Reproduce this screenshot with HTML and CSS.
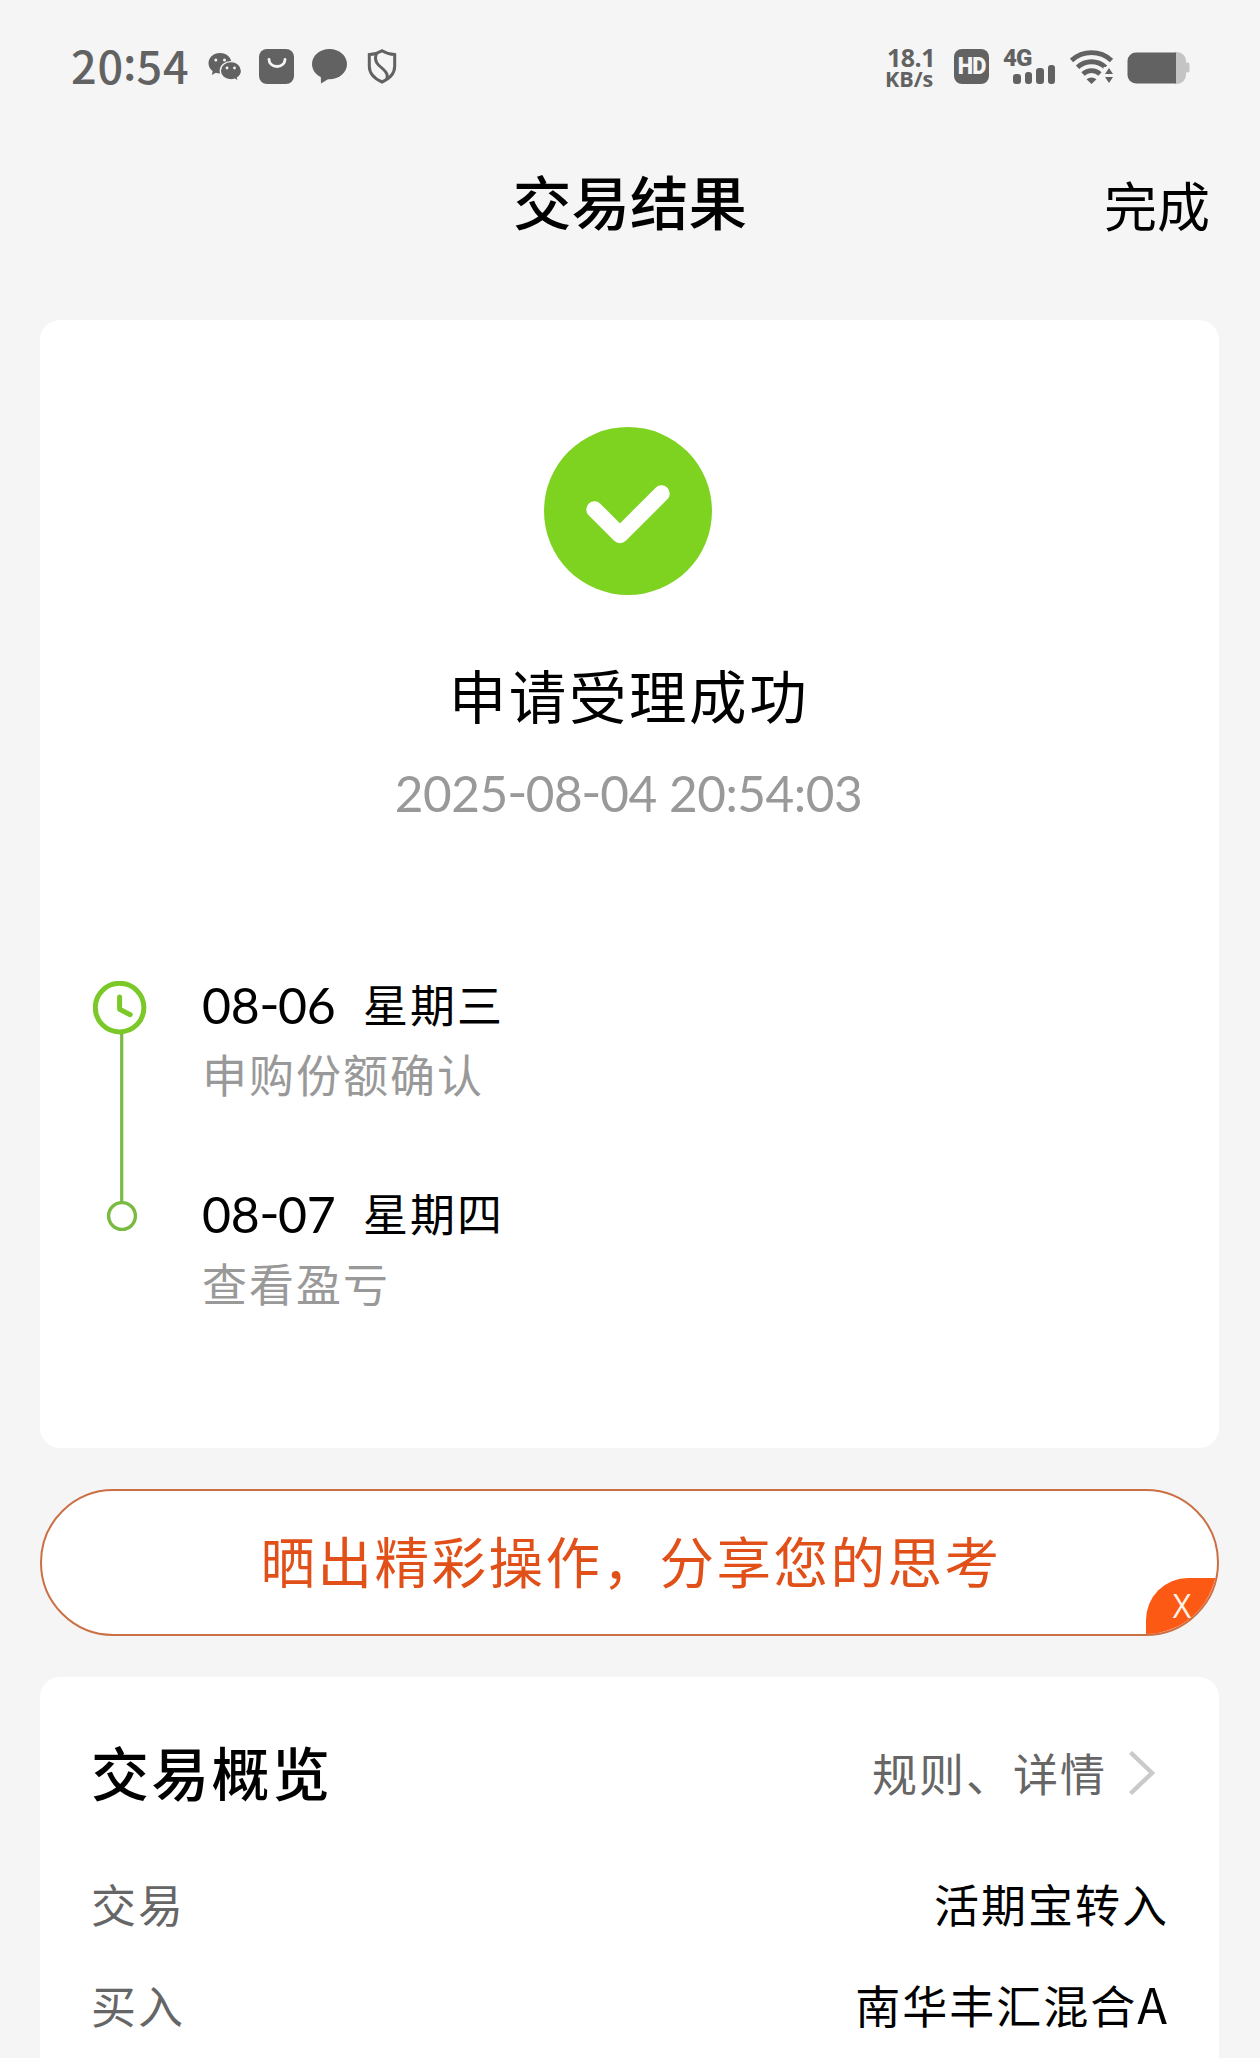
FILE: index.html
```html
<!DOCTYPE html>
<html lang="zh-CN">
<head>
<meta charset="utf-8">
<title>交易结果</title>
<link rel="stylesheet" href="styles.css">
</head>
<body>
<div class="status">
  <div class="status-left">
    <span class="clock">20<span class="colon">:</span>54</span>
    <svg class="i-wechat" width="34" height="28" viewBox="0 0 34 28">
      <path fill="#626262" d="M12 0C5.400 0 .5 4.500 .5 10.300c0 3.200 1.600 6 4.200 8L3.800 22l4-2.200c1.300.4 2.700.7 4.200.7C18.600 20.500 23.500 16 23.500 10.300S18.600 0 12 0z"/>
      <path fill="#626262" stroke="#f5f5f5" stroke-width="1.300" d="M23 8.600c-6 0-10.700 4-10.700 9.100S17 26.800 23 26.800c1.300 0 2.600-.2 3.800-.6l3.600 2-.9-3.300c2.500-1.700 4-4.300 4-7.200 0-5.100-4.700-9.100-10.500-9.100z"/>
      <g fill="#f5f5f5"><circle cx="7.800" cy="7" r="1.500"/><circle cx="16.500" cy="7" r="1.500"/><circle cx="19" cy="15" r="1.400"/><circle cx="26.500" cy="15" r="1.400"/></g>
    </svg>
    <svg class="i-bag" width="35" height="35" viewBox="0 0 35 35">
      <rect width="35" height="35" rx="8" fill="#626262"/>
      <path d="M10 10.500a8 7 0 0 0 16 0" fill="none" stroke="#f5f5f5" stroke-width="2.800" stroke-linecap="round"/>
    </svg>
    <svg class="i-chat" width="35" height="35" viewBox="0 0 35 35">
      <path fill="#626262" d="M17.500 0C7.800 0 0 6.700 0 15c0 5.700 3.500 10.500 8.800 13L9 34.500l7-4.300c10.700.6 19-6.200 19-15.200C35 6.700 27.200 0 17.500 0z"/>
    </svg>
    <svg class="i-shield" width="30" height="35" viewBox="0 0 30 35">
      <path d="M15 1.700c3.800 2.400 8 3.600 12.700 3.900V17c0 7.600-5 12.700-12.700 16C7.300 29.700 2.300 24.600 2.300 17V5.600C7 5.300 11.200 4.100 15 1.700z" fill="none" stroke="#626262" stroke-width="3"/>
      <path d="M9.500 4.500c-2 5-1 8.500 2 11.500l4.500 4c4.500 4 5 6.500 3.500 10.500" fill="none" stroke="#626262" stroke-width="3"/>
    </svg>
  </div>
  <div class="status-right">
    <div class="speed"><span class="speed-num">18.1</span><span class="speed-unit">KB/s</span></div>
    <div class="hd"><span class="hd-text">HD</span></div>
    <div class="signal">
      <span class="net">4G</span>
      <div class="bars"><i class="b1"></i><i class="b2"></i><i class="b3"></i><i class="b4"></i></div>
    </div>
    <svg class="i-wifi" width="44" height="34" viewBox="0 0 44 34">
      <g fill="none" stroke="#626262" stroke-width="4.800">
        <path d="M1.500 10.500a29.500 29.500 0 0 1 40 0"/>
        <path d="M7.500 17.300a20.500 20.500 0 0 1 28 0"/>
        <path d="M13 24a12.500 12.500 0 0 1 17 0"/>
      </g>
      <path fill="#626262" d="M16.500 29.300a7.600 7.600 0 0 1 10 0L21.500 34z"/>
      <path d="M33.500 17h10v17h-10z" fill="#f5f5f5"/>
      <path fill="#626262" d="M39 18l4 6h-8zM39 33l4-6h-8z"/>
    </svg>
    <svg class="i-battery" width="63" height="32" viewBox="0 0 63 32">
      <path d="M48 0h2a9 9 0 0 1 9 9v1.500h1.500a2 2 0 0 1 2 2v6a2 2 0 0 1-2 2H59V23a9 9 0 0 1-9 9h-2z" fill="#c4c4c4"/>
      <path d="M9 .5h40v31H9A8.500 8.500 0 0 1 .5 23V9A8.500 8.500 0 0 1 9 .5z" fill="#626262"/>
    </svg>
  </div>
</div>

<header class="nav">
  <span></span>
  <h1 class="nav-title">交易结果</h1>
  <span class="nav-done">完成</span>
</header>

<main class="page">
  <section class="card result">
    <svg class="check" width="168" height="168" viewBox="0 0 168 168">
      <circle cx="84" cy="84" r="84" fill="#7ed321"/>
      <path d="M50.500 82.500L76 108l41.500-41.500" fill="none" stroke="#fff" stroke-width="16.500" stroke-linecap="round" stroke-linejoin="round"/>
    </svg>
    <h2 class="result-title">申请受理成功</h2>
    <div class="result-time">2025<span class="dash">-</span>08<span class="dash">-</span>04 20:54:03</div>
    <div class="timeline">
      <svg class="track" width="54" height="252" viewBox="0 0 54 252">
        <path d="M28.700 52v170" stroke="#7aba46" stroke-width="3.200"/>
        <circle cx="26.600" cy="26.600" r="24.300" fill="none" stroke="#7bc928" stroke-width="5"/>
        <path d="M26.600 16v12.300l10.600 5.400" fill="none" stroke="#7bc928" stroke-width="5" stroke-linecap="round" stroke-linejoin="round"/>
        <circle cx="29" cy="235" r="13.400" fill="#fff" stroke="#79bb41" stroke-width="3.400"/>
      </svg>
      <div class="steps">
        <div class="step">
          <div class="step-date"><span class="num">08<span class="dash">-</span>06</span><span>星期三</span></div>
          <div class="step-desc">申购份额确认</div>
        </div>
        <div class="step">
          <div class="step-date"><span class="num">08<span class="dash">-</span>07</span><span>星期四</span></div>
          <div class="step-desc">查看盈亏</div>
        </div>
      </div>
    </div>
  </section>

  <div class="share">
    <span class="share-text">晒出精彩操作，分享您的思考</span>
    <span class="share-close">X</span>
  </div>

  <section class="card overview">
    <div class="overview-head">
      <h2 class="overview-title">交易概览</h2>
      <div class="overview-link"><span>规则、详情</span>
        <svg width="26" height="44" viewBox="0 0 26 44"><path d="M1.500 1.500L23 22 1.500 42.500" fill="none" stroke="#cacaca" stroke-width="4.400"/></svg>
      </div>
    </div>
    <div class="row"><span class="label">交易</span><span class="value">活期宝转入</span></div>
    <div class="row"><span class="label">买入</span><span class="value">南华丰汇混合<span class="latin">A</span></span></div>
  </section>
</main>
</body>
</html>
```
FILE: styles.css
```css
* { box-sizing: border-box; }

body {
  margin: 0;
  height: 2058px;
  overflow: hidden;
  background: #f5f5f5;
  color: #000;
  font-family: "Noto Sans CJK SC", sans-serif;
}

h1, h2 { margin: 0; }

svg { display: block; flex: none; }

/* status bar */
.status {
  display: flex;
  justify-content: space-between;
  height: 134px;
  padding: 0 70px 0 71px;
  color: #626262;
}

.status-left, .status-right {
  display: flex;
  align-items: flex-start;
}

.clock {
  width: 137px;
  margin-top: 35px;
  font-size: 45px;
  line-height: 60px;
  font-weight: 500;
  letter-spacing: 0.900px;
}

.colon {
  display: inline-block;
  line-height: 1;
  margin: 0 -1px;
  transform: translateY(-0.09em);
}

.i-wechat { margin-top: 53px; overflow: visible; }
.i-bag { margin: 49px 0 0 17px; }
.i-chat { margin: 49px 0 0 18px; }
.i-shield { margin: 49px 0 0 20px; }

.speed {
  display: flex;
  flex-direction: column;
  width: 69px;
  margin-top: 47px;
  font-family: "Open Sans", sans-serif;
  font-weight: 700;
}

.speed-num { padding-left: 2px; font-size: 25px; line-height: 21px; letter-spacing: -0.500px; }
.speed-unit { font-size: 21.500px; line-height: 22px; }

.hd {
  display: flex;
  align-items: center;
  justify-content: center;
  width: 35px;
  height: 35px;
  margin-top: 49px;
  border-radius: 8px;
  background: #626262;
  color: #f5f5f5;
  font: 900 23px/35px Roboto, sans-serif;
}

.hd-text { letter-spacing: -1px; transform: scaleX(0.95); }

.signal {
  width: 52px;
  height: 35px;
  margin: 49px 0 0 14px;
  display: flex;
  flex-direction: column;
  justify-content: space-between;
}

.net {
  height: 15px;
  font: 900 24px/18px Roboto, sans-serif;
  letter-spacing: -1px;
}

.bars {
  display: flex;
  align-items: flex-end;
  gap: 4px;
  height: 20px;
  padding-left: 10px;
}

.bars i { width: 7.500px; border-radius: 3px; background: #626262; }
.b1 { height: 10px; }
.b2 { height: 12px; }
.b3 { height: 16px; }
.b4 { height: 19px; }

.i-wifi { margin: 50px 0 0 15px; }
.i-battery { margin: 52px 0 0 13px; }

/* navigation */
.nav {
  display: grid;
  grid-template-columns: 1fr auto 1fr;
  align-items: center;
  height: 130px;
  padding: 2px 50px 0;
}

.nav-title { font-size: 58.500px; line-height: 84px; font-weight: 500; }
.nav-done { font-size: 53px; line-height: 84px; text-align: right; padding-top: 7px; }

/* cards */
.page {
  display: flex;
  flex-direction: column;
  gap: 41px;
  padding: 56px 41px 0 40px;
}

.card { border-radius: 20px; background: #fff; }

.result {
  display: flex;
  flex-direction: column;
  align-items: center;
  height: 1128px;
  padding: 107px 55px 0 53px;
}

.check { margin-right: 1px; }

.result-title {
  margin-top: 59px;
  padding-left: 1px;
  font-size: 57.500px;
  line-height: 80px;
  font-weight: 400;
  letter-spacing: 2.600px;
}

.result-time {
  margin-top: 29px;
  font-family: Lato, sans-serif;
  font-size: 49.500px;
  line-height: 60px;
  letter-spacing: -0.450px;
  color: #999;
}

.dash {
  display: inline-block;
  transform: translateY(-0.05em) scaleX(1.12);
}

.timeline {
  align-self: stretch;
  display: flex;
  gap: 55px;
  margin-top: 158px;
}

.steps {
  display: flex;
  flex-direction: column;
  gap: 68px;
  margin-top: -13px;
}

.step-date {
  display: flex;
  align-items: center;
  height: 71px;
  font-size: 45px;
  line-height: 66px;
  letter-spacing: 2px;
}

.num {
  width: 161px;
  padding-top: 2px;
  font: 50px/66px Lato, sans-serif;
  letter-spacing: -0.200px;
}

.step-desc {
  font-size: 45px;
  line-height: 70px;
  letter-spacing: 2px;
  color: #999;
}

/* share banner */
.share {
  position: relative;
  display: flex;
  align-items: center;
  justify-content: center;
  height: 147px;
  border: 2px solid #cb6f45;
  border-radius: 74px;
  background: #fff;
  overflow: hidden;
}

.share-text {
  padding: 0 0 5px 3px;
  font-size: 54.500px;
  line-height: 80px;
  letter-spacing: 2.500px;
  color: #e2501a;
}

.share-close {
  position: absolute;
  right: -1px;
  bottom: 0;
  width: 72px;
  height: 56px;
  border-top-left-radius: 42px;
  background: #fc5a14;
  color: #fff3e4;
  font: 32px/56px "Open Sans", sans-serif;
  text-align: center;
}

/* overview */
.overview { height: 400px; padding: 51px 49px 0 51px; }

.overview-head {
  display: flex;
  align-items: center;
  justify-content: space-between;
  height: 86px;
}

.overview-title { font-size: 58px; line-height: 86px; font-weight: 500; letter-spacing: 2.300px; }

.overview-link {
  display: flex;
  align-items: center;
  gap: 22px;
  padding: 4px 15px 0 0;
  font-size: 45px;
  line-height: 86px;
  letter-spacing: 2px;
  color: #666;
}

.row {
  display: flex;
  justify-content: space-between;
  height: 101px;
  font-size: 45px;
  line-height: 70px;
  letter-spacing: 2px;
}

.overview-head + .row { margin-top: 55px; }

.label { color: #666; }

.value { padding-right: 1px; }

.latin { margin-right: 2px; font-size: 49px; line-height: 1; letter-spacing: 0; }
```
